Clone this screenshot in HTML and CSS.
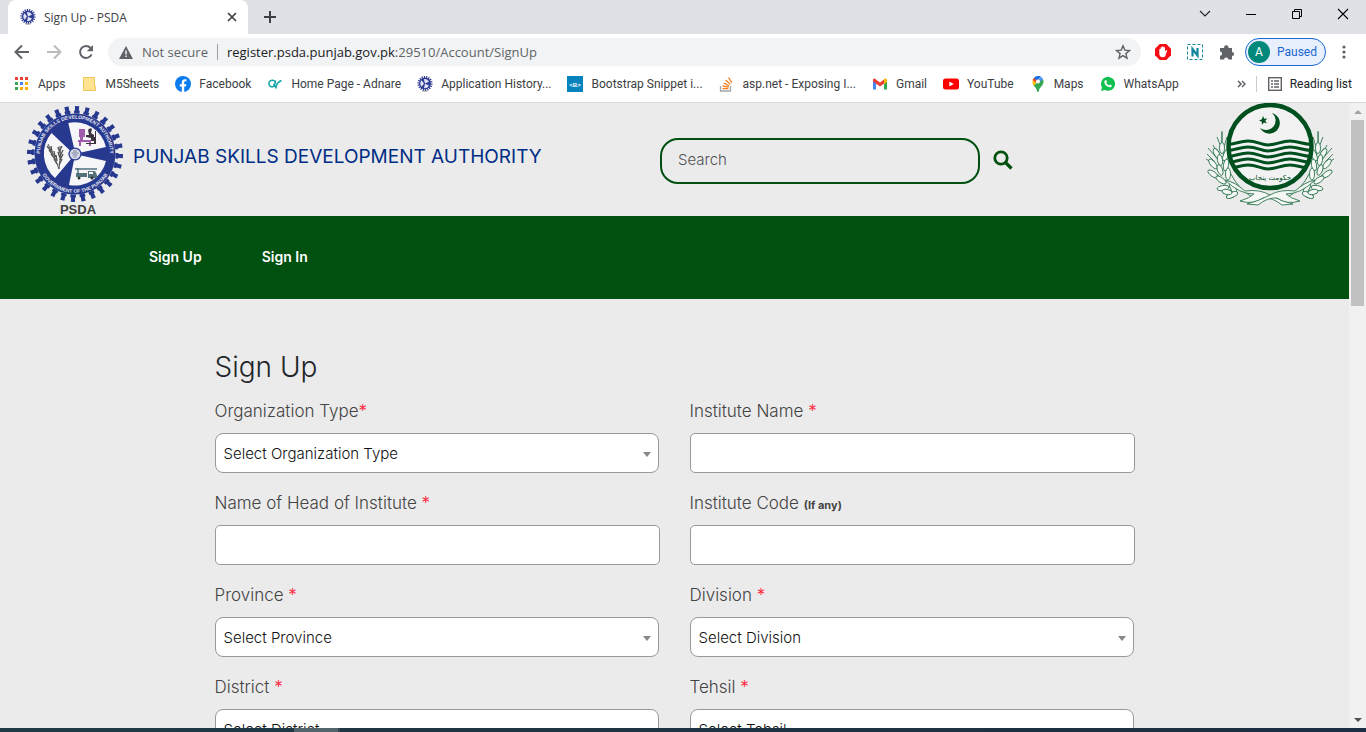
FILE: index.html
```html
<!DOCTYPE html>
<html lang="en">
<head>
<meta charset="utf-8">
<title>Sign Up - PSDA</title>
<link rel="stylesheet" href="styles.css">
</head>
<body>
<svg class="defs" aria-hidden="true">
  <symbol id="mini-gear" viewBox="0 0 16 16">
    <circle cx="8" cy="7.5" r="6.6" fill="none" stroke="#2e3a92" stroke-width="2" pathLength="36" stroke-dasharray="1 1"/>
    <circle cx="8" cy="7.5" r="6" fill="#2e3a92"/>
    <path d="M8 7.5 6.8 3.2A4.5 4.5 0 0 1 12 5.7ZM7 7.5 4.7 4.2A4.5 4.5 0 0 0 4.7 10.8ZM8 7.7 7 12A4.5 4.5 0 0 0 12 9.5Z" fill="#dfe2f3"/>
    <path d="M5.5 15h5" stroke="#888" stroke-width="1"/>
  </symbol>
</svg>
<div class="browser">
  <header class="tabstrip">
    <div class="tab">
      <svg class="i16"><use href="#mini-gear"/></svg>
      <span class="tab-title">Sign Up - PSDA</span>
      <button class="bare" aria-label="Close tab"><svg width="10" height="10" viewBox="0 0 10 10"><path d="m1 1 8 8M9 1 1 9" stroke="#3c4043" stroke-width="1.7"/></svg></button>
    </div>
    <button class="bare new-tab" aria-label="New tab"><svg width="12" height="12" viewBox="0 0 12 12"><path d="M6 0v12M0 6h12" stroke="#3c4043" stroke-width="2"/></svg></button>
    <div class="window-buttons">
      <button class="bare" aria-label="Search tabs"><svg width="12" height="12" viewBox="0 0 12 12"><path d="m1 3 5 5 5-5" fill="none" stroke="#222" stroke-width="1.1"/></svg></button>
      <button class="bare" aria-label="Minimize"><svg width="12" height="12" viewBox="0 0 12 12"><path d="M1 6.500h10" stroke="#000"/></svg></button>
      <button class="bare" aria-label="Restore"><svg width="12" height="12" viewBox="0 0 12 12"><path d="M1.500 3.500h7v7h-7zM3.500 3.500v-2h7v7h-2" fill="none" stroke="#000"/></svg></button>
      <button class="bare" aria-label="Close"><svg width="12" height="12" viewBox="0 0 12 12"><path d="m1 1 10 10M11 1 1 11" stroke="#000" stroke-width="1.1"/></svg></button>
    </div>
  </header>

  <div class="toolbar">
    <button class="bare" aria-label="Back"><svg class="i16" viewBox="0 0 16 16"><path d="M15 8H2M8 1.500 1.500 8 8 14.500" fill="none" stroke="#5f6368" stroke-width="2"/></svg></button>
    <button class="bare" aria-label="Forward"><svg class="i16" viewBox="0 0 16 16"><path d="M1 8h13M8 1.500 14.500 8 8 14.500" fill="none" stroke="#babcbe" stroke-width="2"/></svg></button>
    <button class="bare" aria-label="Reload"><svg class="i16" viewBox="0 0 16 16"><path d="M13.600 10.300A6 6 0 1 1 12.600 4" fill="none" stroke="#5f6368" stroke-width="2"/><path d="M15 1v6.200H8.800z" fill="#5f6368"/></svg></button>
    <div class="omnibox">
      <svg width="14" height="13" viewBox="0 0 14 13"><path d="M7 0l7 13H0z" fill="#5f6368"/><path d="M6.300 4.500h1.500v4H6.300zM6.300 9.600h1.500v1.500H6.300z" fill="#f1f3f4"/></svg>
      <span class="insecure">Not secure</span>
      <span class="url">register.psda.punjab.gov.pk<span class="path">:29510/Account/SignUp</span></span>
      <button class="bare" aria-label="Bookmark this tab"><svg class="i16" viewBox="0 0 16 16"><path d="m8 1.800 1.800 4.300 4.700.400-3.600 3.100 1.100 4.600L8 11.700l-4 2.500 1.100-4.600L1.500 6.500l4.700-.400z" fill="none" stroke="#5f6368" stroke-width="1.400"/></svg></button>
    </div>
    <div class="extensions">
      <svg class="i16" viewBox="0 0 16 16"><path d="M4.700 0h6.600L16 4.700v6.600L11.300 16H4.700L0 11.300V4.700z" fill="#f40d12"/><path d="M4.300 8V5.300q.7-.9 1.300 0V3.500q.7-.9 1.400 0V2.800q.8-.9 1.500 0v.7q.8-.9 1.500 0v4.200l1-1.400q1-.7 1.200.2L10.300 12q-1 1.500-2.700 1.300Q4.300 13 4.300 9.500z" fill="#fff"/></svg>
      <svg class="i16" viewBox="0 0 16 16"><rect x=".5" y=".5" width="15" height="15" fill="none" stroke="#12879b" stroke-dasharray="3 2"/><path d="M5.500 12.500V5l5 6.500V4" fill="none" stroke="#12879b" stroke-width="2.200"/></svg>
      <svg class="i16" viewBox="0 0 16 16"><path d="M1 4h4.200a2.200 2.200 0 1 1 4.200 0H13v3.900a2.100 2.100 0 1 1 0 4.200V15.500H9.300a2.100 2.100 0 1 0-4.200 0H1V11.800a2.100 2.100 0 1 0 0-4.200z" fill="#5f6368"/></svg>
      <button class="profile"><span class="avatar">A</span>Paused</button>
      <button class="bare" aria-label="Menu"><svg width="4" height="14" viewBox="0 0 4 14" fill="#5f6368"><circle cx="2" cy="2" r="1.600"/><circle cx="2" cy="7" r="1.600"/><circle cx="2" cy="12" r="1.600"/></svg></button>
    </div>
  </div>

  <nav class="bookmarks" aria-label="Bookmarks">
    <a href="#"><svg class="i16" viewBox="0 0 16 16"><path d="M1 1h3v3H1zM6 1h3v3H6zM11 1h3v3h-3z" fill="#ea4335"/><path d="M1 6h3v3H1zM1 11h3v3H1z" fill="#34a853"/><path d="M6 6h3v3H6z" fill="#4285f4"/><path d="M11 6h3v3h-3zM6 11h3v3H6zM11 11h3v3h-3z" fill="#fbac05"/></svg>Apps</a>
    <a href="#"><svg class="i16" viewBox="0 0 16 16"><path d="M1.500 1.500h11v9h1v4h-12z" fill="#ffe391" stroke="#f0c65a"/></svg>M5Sheets</a>
    <a href="#"><svg class="i16" viewBox="0 0 16 16"><circle cx="8" cy="8" r="8" fill="#0a7cf0"/><path d="M6.800 16v-5.500h-2V8.200h2V6.400c0-2.100 1.200-3.200 3-3.200l1.700.150v1.900h-1c-1 0-1.300.6-1.300 1.250v1.700h2.200l-.4 2.300H9.200V16z" fill="#fff"/></svg>Facebook</a>
    <a href="#"><svg class="i16" viewBox="0 0 16 16"><path d="M8.500 7.500A3.300 3.300 0 1 0 6 10.700Q8 9.500 8.500 4.500M6.500 8 8.800 11.500Q10 6 14.500 4.500" fill="none" stroke="#0fa3a3" stroke-width="1.500"/></svg>Home Page - Adnare</a>
    <a href="#"><svg class="i16"><use href="#mini-gear"/></svg>Application History...</a>
    <a href="#"><svg class="i16" viewBox="0 0 16 16"><path d="M0 0h16v16H0z" fill="#0683bd"/><text x="8" y="10.500" text-anchor="middle" class="tiny">&lt;B&gt;</text></svg>Bootstrap Snippet i...</a>
    <a href="#"><svg class="i16" viewBox="0 0 16 16"><path d="M1.500 10v5h10v-5" fill="none" stroke="#a5a7aa" stroke-width="1.300"/><path d="M3.500 12.700h6M3.700 10l6 1.200M4.700 7l5.500 2.800M6.600 4l4.800 4.200M9.500 1.500l3.300 5.200" stroke="#f48024" stroke-width="1.300"/></svg>asp.net - Exposing I...</a>
    <a href="#"><svg class="i16" viewBox="0 0 16 16"><path d="M1 4v9.500h3V7z" fill="#4285f4"/><path d="M12 7v6.500h3V4z" fill="#34a853"/><path d="M1 3.500Q1.500 2 3 2.700L8 6.600 13 2.700v4.200L8 10.500 1 5.500z" fill="#ea4335"/><path d="M12 3.500q2.500-2 3 .5v2l-3 2z" fill="#fbbc04"/></svg>Gmail</a>
    <a href="#"><svg class="i16" viewBox="0 0 16 16"><rect y="2.500" width="16" height="11" rx="2.500" fill="#f00"/><path d="M6.300 5.500v5L10.800 8z" fill="#fff"/></svg>YouTube</a>
    <a href="#"><svg class="i16" viewBox="0 0 16 16"><path d="M3.500 9.500Q6.800 12 7.300 15.500q.7 1 1.400 0Q9 12.500 12 9.500L8 6z" fill="#34a853"/><path d="M2.500 5.500q0 2.500 1.300 4.300L10 3 4 1.800Q2.500 3.500 2.500 5.500" fill="#fbbc04"/><path d="M3.700 2.200 7 5l4-4.400A5.500 5.500 0 0 0 3.700 2.200" fill="#1a73e8"/><path d="M11 .7 6 6.500 9 8l4-4.500Q12.700 1.700 11 .7" fill="#4c90f5"/><path d="M13 3.500q1.500 3-1 6L9 12 5 9z" fill="#34a853"/><path d="M3.800 2.200 2.700 4 5 6l2-1.700z" fill="#ea4335"/><circle cx="8" cy="5.600" r="2" fill="#fff"/></svg>Maps</a>
    <a href="#"><svg class="i16" viewBox="0 0 16 16"><path d="M1 15l1-3.600A7 7 0 1 1 4.700 14z" fill="#10c152"/><path d="M5 4.500q1-1 1.500.1l.5 1.300-.6 1q1 1.800 2.700 2.500l.9-.9 1.900.9q-.1 1.900-2 1.900C7 11.300 4.300 8 4.300 6.300q0-1 .7-1.800" fill="#fff"/></svg>WhatsApp</a>
    <div class="bookmarks-end">
      <button class="bare" aria-label="More bookmarks"><svg width="9" height="8" viewBox="0 0 9 8"><path d="m1 1 3 3-3 3M5 1l3 3-3 3" fill="none" stroke="#5f6368" stroke-width="1.500"/></svg></button>
      <a class="reading" href="#"><svg width="14" height="14" viewBox="0 0 14 14"><rect x=".7" y=".7" width="12.600" height="12.600" fill="none" stroke="#5f6368" stroke-width="1.400"/><path d="M3 4h2M3 7h2M3 10h2M6 4h5M6 7h5M6 10h5" stroke="#5f6368" stroke-width="1.500"/></svg>Reading list</a>
    </div>
  </nav>

  <div class="viewport">
    <div class="page">
      <div class="masthead">
        <a class="brand" href="#">
          <svg width="96" height="112" viewBox="-48 -50 96 112" role="img" aria-label="PSDA logo">
            <defs>
              <path id="arc-top" d="M-34 8A35 35 0 1 1 34 8"/>
              <path id="arc-bottom" d="M-36 14A38.500 38.500 0 0 0 36 14"/>
            </defs>
            <circle r="45" fill="none" stroke="#27388f" stroke-width="6" pathLength="56" stroke-dasharray=".8 1.200"/>
            <circle r="42" fill="none" stroke="#27388f" stroke-width="3" pathLength="56" stroke-dasharray="1.200 .8" stroke-dashoffset=".2"/>
            <circle r="40.500" fill="#27388f"/>
            <g fill="#f6f6f8">
              <path d="M-1-6-6.700-31A32 32 0 0 1 31-7L6-1.500A6 6 0 0 0-1-6Z"/>
              <path d="M-5-3.500-23.500-21A32 32 0 0 0-20 24L-4 5A6 6 0 0 1-5-3.500Z"/>
              <path d="M-1 6-6 31A32 32 0 0 0 31 7L6 1.500A6 6 0 0 1-1 6Z"/>
            </g>
            <circle r="6.500" fill="#27388f"/><circle r="5.300" fill="#d9dbe6"/>
            <path d="M-3.500-1h7M-2.500 1h5M-1.500 3h3M-2-3h4" stroke="#7b80a5" stroke-width="1"/>
            <g fill="none" stroke="#555" stroke-width="1.400">
              <path d="M-16 15Q-20 2-27-10M-16 15Q-14 3-15-8" stroke-width="1"/>
              <path d="M-28-8l4 5M-26-4l4 5M-24 0l4 5M-21 5l3 5M-24-8l1 6M-21-3l1 6M-19 1l1 6M-13-8l-3 6M-12-4l-3 6M-12 0l-3 6M-13 5l-3 6M-17-7l2 6M-17-2l2 6"/>
            </g>
            <path d="M4-25h6v8H4zM3-14h13v2H3zM4-12h2v4H4zM14-12h2v4h-2zM5-18h3v4H5z" fill="#a15bad"/>
            <path d="M13-24q2-3 4-1l-1 4 3 2v6h-3v-3l-5-1v-2h3zM20-23h1v13h-2v-7h1zM11-11h9v1h-9z" fill="#3c3340"/>
            <path d="M0 15h22M3 14v5" stroke="#52727c" stroke-width="1.500"/><path d="M1 19h11v4H1zM13 17h7l2 4v3h-9z" fill="#52727c"/><path d="M14 18h4v2h-4z" fill="#fff"/><circle cx="4" cy="24" r="1.500" fill="#333"/><circle cx="17" cy="24" r="1.500" fill="#333"/>
            <text class="ring-text"><textPath href="#arc-top" startOffset="50%" text-anchor="middle">PUNJAB SKILLS DEVELOPMENT AUTHORITY</textPath></text>
            <text class="ring-text"><textPath href="#arc-bottom" startOffset="50%" text-anchor="middle">GOVERNMENT OF THE PUNJAB</textPath></text>
            <text class="logo-text" x="3" y="60" text-anchor="middle">PSDA</text>
          </svg>
          <span>PUNJAB SKILLS DEVELOPMENT AUTHORITY</span>
        </a>
        <form class="search">
          <input type="search" placeholder="Search" aria-label="Search">
          <button class="bare" type="button" aria-label="Submit search"><svg width="20" height="20" viewBox="0 0 20 20"><circle cx="8" cy="8" r="6.200" fill="none" stroke="#00500f" stroke-width="2.800"/><path d="m12.500 12.500 6 6" stroke="#00500f" stroke-width="3.200"/></svg></button>
        </form>
        <svg class="emblem" width="130" height="104" viewBox="0 0 130 104" role="img" aria-label="Government of the Punjab emblem">
          <defs>
            <clipPath id="disc"><circle cx="65" cy="43.500" r="41"/></clipPath>
            <g id="wheat" fill="#f4f7f4" stroke="#2f7650" stroke-width=".9">
              <path d="M17 29Q14 55 30 78Q40 92 52 96" fill="none"/>
              <path d="M17 28v12M12 34l4 10M22 34l-3 10M3 45l8 9M1 56l10 6M4 67l10 6M8 42l4 8M2 51l8 8" fill="none"/>
              <ellipse cx="17" cy="45" rx="2.500" ry="5.500"/>
              <ellipse cx="12" cy="51" rx="2.500" ry="6" transform="rotate(-30 12 51)"/>
              <ellipse cx="21" cy="52" rx="2.500" ry="6" transform="rotate(22 21 52)"/>
              <ellipse cx="15" cy="57" rx="2.500" ry="5.500" transform="rotate(-10 15 57)"/>
              <ellipse cx="8" cy="61" rx="2.500" ry="6" transform="rotate(-40 8 61)"/>
              <ellipse cx="21" cy="62" rx="2.500" ry="6" transform="rotate(10 21 62)"/>
              <ellipse cx="15" cy="67" rx="2.500" ry="5.500" transform="rotate(-20 15 67)"/>
              <ellipse cx="8" cy="71" rx="2.500" ry="6" transform="rotate(-55 8 71)"/>
              <ellipse cx="23" cy="71" rx="2.500" ry="6"/>
              <ellipse cx="16" cy="77" rx="2.500" ry="6" transform="rotate(-55 16 77)"/>
              <ellipse cx="28" cy="85" rx="2.500" ry="6" transform="rotate(-25 28 85)"/>
              <ellipse cx="18" cy="85" rx="2.500" ry="6" transform="rotate(80 18 85)"/>
              <ellipse cx="27" cy="92" rx="2.500" ry="6" transform="rotate(65 27 92)"/>
              <ellipse cx="22" cy="89" rx="2.500" ry="5" transform="rotate(-80 22 89)"/>
              <path d="M20 77Q30 79 40 88Q55 86 65 92Q76 98 88 101L77 102Q67 94 58 95Q48 102 35 98Q45 95 49 91Q34 91 20 77Z"/>
            </g>
          </defs>
          <use href="#wheat"/>
          <use href="#wheat" transform="matrix(-1 0 0 1 130 0)"/>
          <circle cx="65" cy="43.500" r="41" fill="#f1f2f1"/>
          <g clip-path="url(#disc)" fill="none" stroke="#00501f" stroke-width="3">
            <path id="wave" d="M18 42C30 42 34 38 43 38S56 42 63 42S77 38 85 38S100 42 112 42"/>
            <use href="#wave" y="6"/><use href="#wave" y="12"/><use href="#wave" y="18"/><use href="#wave" y="24"/>
          </g>
          <circle cx="65" cy="43.500" r="41.500" fill="none" stroke="#00501f" stroke-width="4.500"/>
          <path d="M67 10A10.500 10.500 0 1 1 55 25A9.500 9.500 0 0 0 67 10Z" fill="#00501f"/>
          <path d="m58 13 1.200 2.800 3-.4-1.900 2.300 1.600 2.700-2.900-.8-2.100 2.100-.1-3-2.800-1.300 2.900-1.200z" fill="#00501f"/>
          <text class="urdu" x="65" y="77" text-anchor="middle">حکومت پنجاب</text>
        </svg>
      </div>

      <nav class="main-nav" aria-label="Main">
        <a href="#">Sign Up</a>
        <a href="#">Sign In</a>
      </nav>

      <main class="content">
        <h1>Sign Up</h1>
        <form class="fields">
          <div class="field"><label for="org">Organization Type<span class="req">*</span></label><div class="select"><select id="org"><option>Select Organization Type</option></select></div></div>
          <div class="field"><label for="name">Institute Name <span class="req">*</span></label><input id="name" type="text"></div>
          <div class="field"><label for="head">Name of Head of Institute <span class="req">*</span></label><input id="head" type="text"></div>
          <div class="field"><label for="code">Institute Code <span class="hint">(If any)</span></label><input id="code" type="text"></div>
          <div class="field"><label for="province">Province <span class="req">*</span></label><div class="select"><select id="province"><option>Select Province</option></select></div></div>
          <div class="field"><label for="division">Division <span class="req">*</span></label><div class="select"><select id="division"><option>Select Division</option></select></div></div>
          <div class="field"><label for="district">District <span class="req">*</span></label><div class="select"><select id="district"><option>Select District</option></select></div></div>
          <div class="field"><label for="tehsil">Tehsil <span class="req">*</span></label><div class="select"><select id="tehsil"><option>Select Tehsil</option></select></div></div>
        </form>
      </main>
    </div>
    <div class="scrollbar">
      <span class="arrow up"></span>
      <span class="thumb"></span>
      <span class="arrow down"></span>
    </div>
  </div>
  <div class="taskbar"><span></span></div>
</div>
</body>
</html>
```
FILE: styles.css
```css
* { box-sizing: border-box; }
body { margin: 0; font-family: "Open Sans", "Noto Sans", sans-serif; font-size: 12px; color: #3c4043; }
a { color: inherit; text-decoration: none; }
svg { flex: none; display: block; }
.defs { position: absolute; width: 0; height: 0; }
.i16 { width: 16px; height: 16px; }
.bare { border: 0; padding: 0; background: none; }

.browser { display: flex; flex-direction: column; height: 100vh; overflow: hidden; background: #fff; }

.tabstrip { display: flex; align-items: center; height: 34px; flex: none; padding-left: 8px; background: #dee1e6; }
.tab { display: flex; align-items: center; gap: 8px; width: 240px; height: 34px; padding: 0 11px 0 12px; background: #fff; border-radius: 8px 8px 0 0; }
.tab-title { flex: 1; }
.new-tab { margin-left: 16px; }
.window-buttons { display: flex; gap: 34px; margin-left: auto; padding: 0 17px 6px 0; }

.toolbar { display: flex; align-items: center; gap: 16px; height: 36px; flex: none; padding: 0 20px 0 14px; }
.omnibox { display: flex; align-items: center; flex: 1; height: 28px; padding: 0 10px 0 11px; border-radius: 14px; background: #f1f3f4; font-size: 13px; margin: 0 -2px; }
.insecure { margin-left: 9px; padding-right: 9px; border-right: 1px solid #9aa0a6; color: #5f6368; line-height: 16px; }
.url { flex: 1; margin-left: 9px; color: #202124; }
.path { color: #5f6368; }
.extensions { display: flex; align-items: center; gap: 16px; }
.profile { display: flex; align-items: center; gap: 7px; height: 28px; padding: 0 8px 0 2px; margin-left: -6px; border: 1px solid #1967d2; border-radius: 14px; background: #e8f0fe; color: #1967d2; font: 12px Roboto, sans-serif; }
.avatar { display: grid; place-items: center; width: 22px; height: 22px; border-radius: 50%; background: #00897b; color: #fff; }

.bookmarks { display: flex; align-items: center; gap: 16px; height: 33px; flex: none; padding: 0 14px 4px; border-bottom: 1px solid #d5d7da; font-family: Roboto, sans-serif; white-space: nowrap; }
.bookmarks a { display: flex; align-items: center; gap: 8px; }
.bookmarks-end { display: flex; align-items: center; gap: 10px; margin-left: auto; }
.bookmarks-end .reading { padding-left: 11px; border-left: 1px solid #c9cbce; line-height: 16px; color: #202124; }
.tiny { font: bold 6px "Liberation Sans", sans-serif; fill: #fff; }

.viewport { display: flex; flex: 1; min-height: 0; }
.page { flex: 1; overflow: hidden; background: #ebebeb; font-family: Inter, "Open Sans", sans-serif; }

.masthead { display: grid; grid-template-columns: 633px 1fr auto; align-items: center; height: 113px; padding: 0 14px 0 27px; }
.brand { display: flex; align-items: center; gap: 10px; color: #002d85; font-size: 19px; font-weight: 400; white-space: nowrap; }
.brand span { padding-bottom: 6px; }
.ring-text { font: bold 5px "Liberation Sans", sans-serif; fill: #e6e8f3; }
.logo-text { font: bold 13px "Liberation Sans", sans-serif; fill: #3d3d3d; }
.urdu { font: 7px "DejaVu Sans", sans-serif; fill: #00501f; }
.search { display: flex; align-items: center; gap: 13px; padding-top: 2px; }
.search input { width: 320px; height: 46px; padding: 0 16px 2px; border: 2px solid #00500f; border-radius: 18px; background: transparent; font: 300 15px Inter, sans-serif; }
.search input::placeholder { color: #4d5154; opacity: 1; }
.search .bare { padding-bottom: 2px; }
.emblem { align-self: start; }

.main-nav { display: flex; align-items: center; gap: 60px; height: 83px; padding: 0 149px 2px; background: #005010; color: #fff; font-size: 14px; font-weight: 600; }

.content { max-width: 920px; margin: 0 auto; padding-top: 48px; }
h1 { margin: 0 0 12px; font-size: 28px; font-weight: 300; line-height: 40px; color: #212529; }
.fields { display: grid; grid-template-columns: 1fr 1fr; gap: 18px 30px; }
.field { display: flex; flex-direction: column; gap: 10px; }
label { font-size: 17px; font-weight: 300; line-height: 24px; color: #444; }
.req { color: #ff2038; }
.hint { font-size: 11px; font-weight: 700; line-height: 11px; }
.field input, .field select { width: 100%; height: 40px; padding: 0 9px; border: 1px solid #999; border-radius: 5px; background: #fff; font: 300 15px Inter, sans-serif; color: #111; }
.select { position: relative; margin-right: 1px; }
.field select { display: block; appearance: none; border-radius: 8px; padding: 0 8px; }
.select::after { content: ""; position: absolute; right: 8px; top: 19px; border: 4px solid transparent; border-top: 5px solid #888; border-bottom: 0; pointer-events: none; }

.scrollbar { display: flex; flex-direction: column; align-items: center; width: 17px; padding: 7px 0 6px; background: #f1f1f1; }
.thumb { width: 13px; height: 186px; margin-top: 6px; background: #c1c1c1; }
.arrow { border: 4px solid transparent; }
.up { border-top: 0; border-bottom-color: #a3a3a3; }
.down { border-bottom: 0; border-top-color: #505050; margin-top: auto; }

.taskbar { flex: none; height: 4px; padding-left: 294px; background: linear-gradient(90deg, #203a45, #1b2d42); }
.taskbar span { display: block; width: 46px; height: 4px; background: #52646c; border-right: 2px solid #34464f; }
```
